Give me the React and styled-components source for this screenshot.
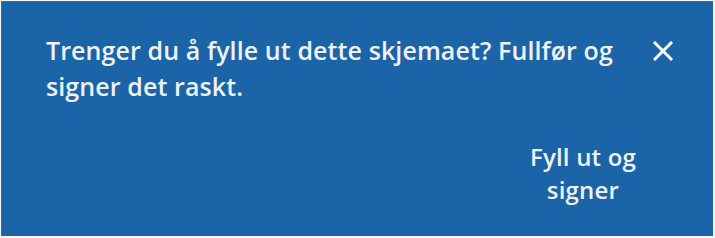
import React from "react";
import styled, { createGlobalStyle } from "styled-components";

const Global = createGlobalStyle`
  html, body { margin: 0; padding: 0; background: #f4f6f9; }
  body { font-family: "Open Sans", "Liberation Sans", sans-serif; }
`;

const Banner = styled.div`
  box-sizing: border-box;
  width: 712px;
  height: 235px;
  margin: 1px 0 0 1px;
  background: #1b64a8;
  border-left: 1px solid #1e70b8;
  border-top: 1px solid #1e6cb3;
  padding: 30px 38px 0 44px;
  display: flex;
  flex-direction: column;
  color: #eef2f7;
`;

const TopRow = styled.div`
  display: flex;
  align-items: flex-start;
  justify-content: space-between;
`;

const Message = styled.p`
  margin: 0;
  width: 590px;
  font-size: 25px;
  font-weight: 600;
  line-height: 36px;
  letter-spacing: 0.1px;
`;

const Close = styled.button`
  border: 0;
  background: transparent;
  padding: 0;
  margin-top: 7px;
  width: 24px;
  height: 24px;
  display: flex;
  align-items: center;
  justify-content: center;
  cursor: pointer;
`;

const Action = styled.button`
  align-self: flex-end;
  margin: 36px 27px 0 0;
  border: 0;
  background: transparent;
  color: #eef2f7;
  font-family: inherit;
  font-size: 24px;
  font-weight: 600;
  line-height: 33px;
  letter-spacing: 0.2px;
  text-align: center;
  width: 130px;
  padding: 0;
`;

export default function App() {
  return (
    <>
      <Global />
      <Banner>
        <TopRow>
          <Message>
            Trenger du å fylle ut dette skjemaet? Fullfør og signer det raskt.
          </Message>
          <Close aria-label="Lukk">
            <svg width="20" height="20" viewBox="0 0 20 20">
              <path d="M2 2 L18 18 M18 2 L2 18" stroke="#ffffff" strokeWidth="3" strokeLinecap="square" />
            </svg>
          </Close>
        </TopRow>
        <Action>
          Fyll ut og
          <br />
          signer
        </Action>
      </Banner>
    </>
  );
}
